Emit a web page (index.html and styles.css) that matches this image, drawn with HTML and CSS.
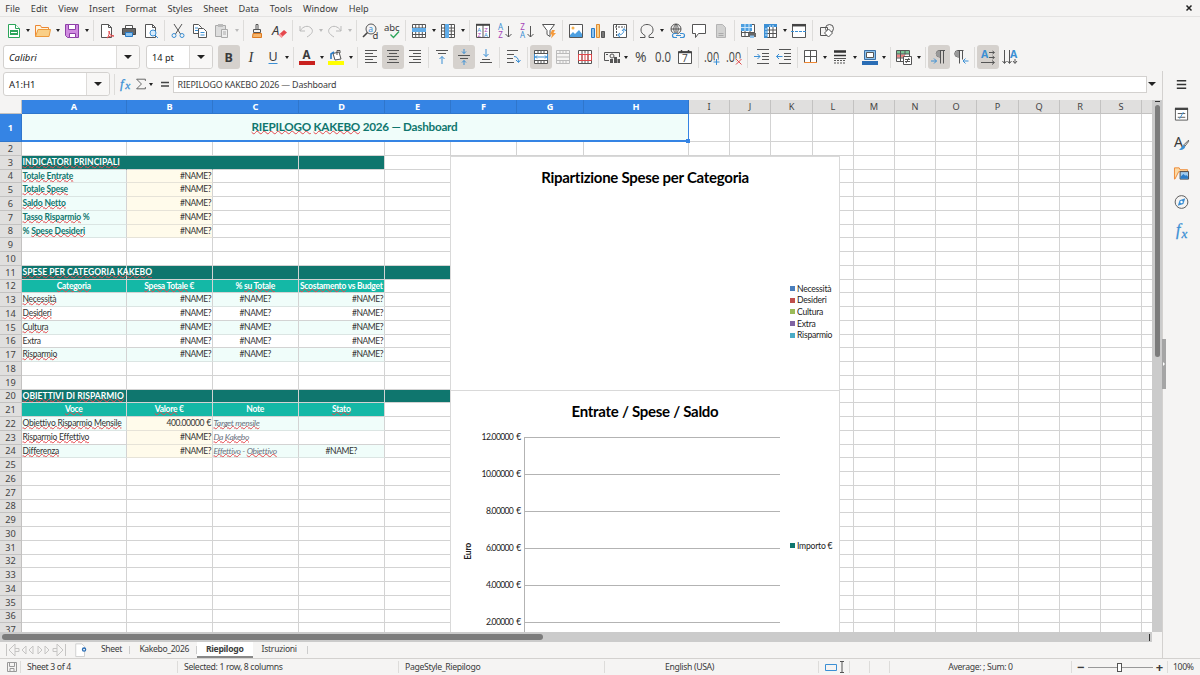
FILE: index.html
```html
<!DOCTYPE html>
<html lang="en">
<head>
  <meta charset="UTF-8" />
  <meta name="viewport" content="width=device-width, initial-scale=1.0"/>
  <title>Kakebo 2026</title>
  <link rel="stylesheet" href="styles.css">
</head>
<body>
  <nav class="menubar">
    <span>File</span><span>Edit</span><span>View</span><span>Insert</span><span>Format</span><span>Styles</span><span>Sheet</span><span>Data</span><span>Tools</span><span>Window</span><span>Help</span>
    <svg class="close" viewBox="0 0 8 8"><path stroke="#222" stroke-width="1.500" d="M1.500 1.500l5 5M6.500 1.500l-5 5"/></svg>
  </nav>

  <!-- Standard toolbar -->
  <div class="toolbar">
    <button><svg viewBox="0 0 16 16"><path class="gn" d="M2.500 1.500h7l4 4v9h-11z"/><path class="gn" d="M9.500 1.500v4h4"/><path fill="#2ca55a" d="M4 7h8v5H4z"/><path stroke="#fff" d="M5 9.500h6"/></svg></button><i class="dd"></i>
    <button><svg viewBox="0 0 16 16"><path fill="#fff3dc" stroke="#ed8733" d="M.5 13.500v-11h5l1 2h7v2"/><path fill="#f9cf87" stroke="#ed9a3c" d="M3 6.500h12.500l-1.500 7H.5z"/></svg></button><i class="dd"></i>
    <button><svg viewBox="0 0 16 16"><path fill="#d08be0" stroke="#8e3fa8" d="M1.500 1.500h13v13h-11l-2-2z"/><path fill="#fff" stroke="#8e3fa8" d="M4.500 1.500h7v5h-7zM5.500 10.500h6v4h-6z"/></svg></button><i class="dd"></i>
    <i class="sep"></i>
    <button><svg viewBox="0 0 16 16"><path class="paper" d="M2.500 1.500h7l3 3v10h-10z"/><path class="g" d="M9.500 1.500v3h3"/><path class="r" d="M8 15c2-2 2.500-5 2-7 0 3 2 5 5 5-3-.5-5 .5-7 2"/></svg></button>
    <button><svg viewBox="0 0 16 16"><path class="paper" d="M4.500 2.500h7v3h-7z"/><path fill="#666" stroke="#444" d="M1.500 5.500h13v6h-13z"/><path fill="#8ec3ee" stroke="#2a7cc7" d="M4.500 9.500h7v4h-7z"/></svg></button>
    <button><svg viewBox="0 0 16 16"><path class="paper" d="M2.500 1.500h7l3 3v10h-10z"/><path class="g" d="M9.500 1.500v3h3"/><circle cx="10" cy="10" r="3" fill="#d7ebfb" stroke="#3b8fd4"/><path class="b" d="M12 12l3 3"/></svg></button>
    <i class="sep"></i>
    <button><svg viewBox="0 0 16 16"><path class="g" d="M4 1l6.500 10M12 1L5.500 11"/><circle class="b" cx="4" cy="12.500" r="2"/><circle class="b" cx="12" cy="12.500" r="2"/></svg></button>
    <button><svg viewBox="0 0 16 16"><path class="paper" d="M1.500 1.500h5l3 3v6h-8z"/><path class="paper" d="M6.500 5.500h5l3 3v6h-8z"/><path class="b" d="M3 5h3M3 7.500h3M8.500 9.500h4M8.500 12h4"/></svg></button>
    <button class="off"><svg viewBox="0 0 16 16"><path fill="#ddd" stroke="#aaa" d="M1.500 2.500h10v11h-10z"/><path fill="#bbb" d="M4 1h5v3H4z"/><path fill="#eee" stroke="#aaa" d="M7.500 6.500h6v8h-6zM9 9h3M9 11h3"/></svg></button><i class="dd off"></i>
    <i class="sep"></i>
    <button><svg viewBox="0 0 16 16"><path class="g" d="M7 1.500h2v5H7zM4.500 6.500h7v3h-7z"/><path fill="#f6b56c" stroke="#df7a20" d="M4 10.500h8.500v4h-9z"/></svg></button>
    <button><svg viewBox="0 0 16 16"><text class="dark it" x="1" y="12" font-size="13">A</text><path fill="#e5484d" d="M7.500 12l5.500-5 3 2.500-5.500 5z"/><path fill="#f9a0a2" d="M7.500 12l1.500-1.500 3 3L10.500 15z"/></svg></button>
    <i class="sep"></i>
    <button class="off"><svg viewBox="0 0 16 16"><path class="lg" d="M2 3v5h5M2 8c3-5 8-6 11-3s1 6-4 9"/></svg></button><i class="dd off"></i>
    <button class="off"><svg viewBox="0 0 16 16"><path class="lg" d="M14 3v5H9M14 8c-3-5-8-6-11-3s-1 6 4 9"/></svg></button><i class="dd off"></i>
    <i class="sep"></i>
    <button><svg viewBox="0 0 16 16"><circle class="g" cx="9" cy="6" r="5"/><path stroke="#444" stroke-width="1.600" d="M5.500 9.500L1 14"/><text class="blue" x="6.200" y="8.500" font-size="8.500">a</text><text class="dark" x="10.500" y="15.500" font-size="9.500">d</text></svg></button>
    <button><svg viewBox="0 0 16 16"><text class="dark" x="0" y="7.500" font-size="9.500" textLength="15.500">abc</text><path fill="none" stroke="#2ca55a" stroke-width="1.300" d="M6.500 11.500l3 3L15 8.500"/></svg></button>
    <i class="sep"></i>
    <button><svg viewBox="0 0 16 16"><path class="paper" d="M1.500 1.500h13v13h-13z"/><path class="g" d="M1.500 5h13M1.500 11.500h13M4.700 1.500v13M8 1.500v13M11.300 1.500v13"/><path fill="#60adea" d="M1 5h14v4H1z"/></svg></button><i class="dd"></i>
    <button><svg viewBox="0 0 16 16"><path class="paper" d="M1.500 1.500h13v13h-13z"/><path class="g" d="M1.500 5h13M1.500 8h13M1.500 11.500h13M4.700 1.500v13M11.300 1.500v13"/><path fill="#60adea" d="M5 1h4v14H5z"/></svg></button><i class="dd"></i>
    <i class="sep"></i>
    <button><svg viewBox="0 0 16 16"><path class="paper" d="M1.500 1.500h13v13h-13zM8 1.500v13"/><path stroke="#444" stroke-width="2" d="M1 1.800h14"/><text class="blue" x="2.300" y="8.500" font-size="6">A</text><text class="purple" x="2.500" y="14" font-size="6">Z</text><text class="purple" x="9.300" y="8.500" font-size="6">Z</text><text class="blue" x="9" y="14" font-size="6">A</text></svg></button>
    <button><svg viewBox="0 0 16 16"><text class="blue" x="1" y="7" font-size="8">A</text><text class="purple" x="1.300" y="14.500" font-size="8">Z</text><path class="g" d="M11.500 3v11M8.500 11l3 3 3-3"/></svg></button>
    <button><svg viewBox="0 0 16 16"><text class="purple" x="1.300" y="7" font-size="8">Z</text><text class="blue" x="1" y="14.500" font-size="8">A</text><path class="g" d="M11.500 3v11M8.500 11l3 3 3-3"/></svg></button>
    <button><svg viewBox="0 0 16 16"><path class="paper" d="M1.500 1.500h12l-4.500 6v6l-3-2v-4z"/><path fill="#f59a3c" d="M11 7h3l-1.500 3H15l-5 5.500 1-4H9z"/></svg></button>
    <i class="sep"></i>
    <button><svg viewBox="0 0 16 16"><path class="paper" d="M1.500 1.500h13v13h-13z"/><circle cx="5" cy="5" r="1.500" fill="#f6b14f"/><path fill="#4c9fe0" d="M2 14v-2l3-3 2 2 4-4 3 4v3z"/></svg></button>
    <button><svg viewBox="0 0 16 16"><path fill="#8ec3ee" stroke="#2a7cc7" d="M1.500 5.500h3v9h-3z"/><path fill="#f9cf87" stroke="#df8a30" d="M6.500 1.500h3v13h-3z"/><path fill="#777" stroke="#555" d="M11.500 8.500h3v6h-3z"/></svg></button>
    <button><svg viewBox="0 0 16 16"><path class="paper" d="M1.500 1.500h13v13h-13z"/><path class="g" d="M3 4h10M4.500 2v12" stroke-dasharray="2 1"/><path class="b" d="M6 12c4 0 6-2 6-6M10 8l2-2.500L14 8M8 10l-2.500 2L8 14"/></svg></button>
    <i class="sep"></i>
    <button><svg viewBox="0 0 16 16"><path class="g" d="M1 14.500h5v-2C3 11 2 9 2 7c0-3.500 2.500-5.500 6-5.500s6 2 6 5.500c0 2-1 4-4 5.500v2h5"/></svg></button><i class="dd"></i>
    <button><svg viewBox="0 0 16 16"><circle class="g" cx="7" cy="6" r="5"/><path class="g" d="M2 6h10M7 1v10M7 1c-3 3-3 7 0 10M7 1c3 3 3 7 0 10"/><path fill="#f5f4f3" stroke="#3b8fd4" stroke-width="1.200" d="M8 10.500H5.500a2 2 0 000 4H8M11 10.500h2.500a2 2 0 010 4H11M7 12.500h5"/></svg></button>
    <button><svg viewBox="0 0 16 16"><path class="paper" d="M1.500 1.500h13v9h-7l-3 4v-4h-3z"/></svg></button>
    <button class="off"><svg viewBox="0 0 16 16"><path fill="#d2d2d1" stroke="#b4b4b4" d="M3.500 1.500h6l3 3v10h-9z"/><path stroke="#aaa" d="M5.500 10.500h5M5.500 12.500h5"/></svg></button>
    <i class="sep"></i>
    <button><svg viewBox="0 0 16 16"><path class="paper" d="M1.500 1.500h13v12h-13zM1.500 9.500h13M5 1.500v12M10 1.500v12"/><path fill="#4c9fe0" d="M1 1h11v7H1z"/><path stroke="#cde6f9" d="M1 4.500h11M5 1v7M9 1v7"/><path fill="#666" d="M8 10h8v4H8z"/><path fill="#8ec3ee" d="M10 12.500h4V15h-4z"/></svg></button>
    <button><svg viewBox="0 0 16 16"><path class="paper" d="M3.500 1.500h11v13h-11zM3.500 7h11M3.500 10.500h11M7.500 1.500v13M11 1.500v13"/><path fill="#3b8fd4" d="M2 1h13v3H2zM2 1h3.500v14H2z"/><path stroke="#cde6f9" d="M3 6h2M3 9h2M3 12h2M8 2v2M11 2v2"/></svg></button><i class="dd"></i>
    <button><svg viewBox="0 0 16 16"><path class="paper" d="M1.500 2.500h13v12h-13z"/><path stroke="#444" stroke-width="2.500" d="M1 2.200h14"/><path class="b" stroke-dasharray="3 1" d="M0 8.500h16"/></svg></button>
    <i class="sep"></i>
    <button><svg viewBox="0 0 16 16"><path class="g" d="M1.500 4.500h7v8h-7z"/><circle class="g" cx="10.500" cy="5.500" r="4"/><path class="paper" d="M9.500 6l4 4-4 4-4-4z"/></svg></button>
  </div>

  <!-- Formatting toolbar -->
  <div class="toolbar format">
    <div class="combo font"><em>Calibri</em><u></u></div>
    <div class="combo size"><span>14 pt</span><u></u></div>
    <button class="on"><svg viewBox="0 0 16 16"><text class="dark bold" x="3.500" y="12.500" font-size="12.500">B</text></svg></button>
    <button><svg viewBox="0 0 16 16"><text class="dark serif" x="5.500" y="12.500" font-size="14.500">I</text></svg></button>
    <button><svg viewBox="0 0 16 16"><text class="dark" x="3.500" y="12" font-size="12.500">U</text><path stroke="#3b8fd4" d="M3.500 14.500h9"/></svg></button><i class="dd"></i>
    <i class="sep"></i>
    <button><svg viewBox="0 0 16 16"><text class="dark bold" x="3.500" y="10" font-size="11.500">A</text><path fill="#c9211e" d="M0 12h16v4H0z"/></svg></button><i class="dd"></i>
    <button><svg viewBox="0 0 16 16"><path class="paper" d="M5 4.500l6-1.500 2 7-6 1z"/><path class="g" d="M9 6V1.500h3V4"/><path fill="none" stroke="#2a7cc7" stroke-width="1.600" d="M3 10V5l3-2"/><path fill="#ffff00" d="M0 12h16v4H0z"/></svg></button><i class="dd"></i>
    <i class="sep"></i>
    <button><svg viewBox="0 0 16 16"><path class="g" d="M2 1.500h12M2 4.500h8M2 7.500h12M2 10.500h8M2 13.500h12"/></svg></button>
    <button class="on"><svg viewBox="0 0 16 16"><path class="g" d="M2 1.500h12M4 4.500h8M2 7.500h12M4 10.500h8M2 13.500h12"/></svg></button>
    <button><svg viewBox="0 0 16 16"><path class="g" d="M2 1.500h12M6 4.500h8M2 7.500h12M6 10.500h8M2 13.500h12"/></svg></button>
    <i class="sep"></i>
    <button><svg viewBox="0 0 16 16"><path class="g" d="M2 1.500h12M4 4.500h8"/><path class="b" d="M8 15V7.500M5.500 10L8 7.500l2.500 2.500"/></svg></button>
    <button class="on"><svg viewBox="0 0 16 16"><path class="g" d="M2 6.500h12M4 9.500h8"/><path class="b" d="M8 0v4.500M6 2.500l2 2 2-2M8 16v-4.500M6 13.500l2-2 2 2"/></svg></button>
    <button><svg viewBox="0 0 16 16"><path class="g" d="M2 13.500h12M4 10.500h8"/><path class="b" d="M8 0v7.500M5.500 5L8 7.500 10.500 5"/></svg></button>
    <i class="sep"></i>
    <button><svg viewBox="0 0 16 16"><path class="g" d="M2 1.500h11M2 5.500h7M2 9.500h6M2 13.500h7"/><path class="b" d="M9 7.500c3 0 4.500 2 4.500 5.500M11 11l2.500 2.500 2-2.500"/></svg></button>
    <i class="sep"></i>
    <button class="on"><svg viewBox="0 0 16 16"><path class="paper" d="M1.500 1.500h13v13h-13zM1.500 4.500h13M1.500 11.500h13M5 1.500v3M8 1.500v3M11 1.500v3M5 11.500v3M8 11.500v3M11 11.500v3"/><path class="b" d="M2 8h12M4 6.500L2.500 8 4 9.500M12 6.500L13.500 8 12 9.500M1.500 5v6M14.500 5v6"/></svg></button>
    <button class="off"><svg viewBox="0 0 16 16"><path class="lg" d="M1.500 1.500h13v13h-13zM1.500 4.500h13M1.500 11.500h13M5 1.500v3M8 1.500v3M11 1.500v3M5 11.500v3M8 11.500v3M11 11.500v3M1.500 8h13"/></svg></button>
    <button><svg viewBox="0 0 16 16"><path class="paper" d="M1.500 1.500h13v13h-13zM5 1.500v13M8 1.500v3M11 1.500v13M8 11.500v3"/><path class="r" d="M1.500 5.500h13v6h-13zM5 5.500v6M8 5.500v6M11 5.500v6"/></svg></button>
    <i class="sep"></i>
    <button><svg viewBox="0 0 16 16"><path class="g" d="M5 11.500H.5v-8h15V8"/><circle class="g" cx="8" cy="7" r="2"/><path fill="#555" d="M6 10h3v4H6zM10 8h3v6h-3zM13.500 10H16v4h-2.500zM2 5h2v1H2z"/></svg></button><i class="dd"></i>
    <button><svg viewBox="0 0 16 16"><text class="thin" x="2" y="13" font-size="14" textLength="11.500" lengthAdjust="spacingAndGlyphs">%</text></svg></button>
    <button><svg viewBox="0 0 16 16"><text class="thin" x="0" y="13" font-size="15" textLength="16" lengthAdjust="spacingAndGlyphs">0.0</text></svg></button>
    <button><svg viewBox="0 0 16 16"><path class="paper" d="M1.500 2.500h13v12h-13z"/><path stroke="#444" stroke-width="1.500" d="M1 3.500h14M4.500 1v3M11.500 1v3"/><text class="thin" x="5" y="13" font-size="10">7</text></svg></button>
    <i class="sep"></i>
    <button><svg viewBox="0 0 16 16"><text class="thin" x="0" y="12.500" font-size="15" textLength="15" lengthAdjust="spacingAndGlyphs">.00</text><path class="halo" d="M12.500 9v6M9.500 12.500h6"/><path class="b" d="M12.500 10v6M9.500 13h6"/></svg></button>
    <button><svg viewBox="0 0 16 16"><text class="thin" x="0" y="12.500" font-size="15" textLength="15" lengthAdjust="spacingAndGlyphs">.00</text><path class="halo" d="M10 10l5 5M15 10l-5 5"/><path class="r" d="M10 10l5.500 5.500M15.500 10L10 15.500"/></svg></button>
    <i class="sep"></i>
    <button><svg viewBox="0 0 16 16"><path class="g" d="M3 .5h12M8 4.500h7M8 7.500h7M8 10.500h7M3 14.500h12"/><path class="b" d="M0 7.500h6M3.500 5L6 7.500 3.500 10"/></svg></button>
    <button><svg viewBox="0 0 16 16"><path class="g" d="M3 .5h12M8 4.500h7M8 7.500h7M8 10.500h7M3 14.500h12"/><path class="b" d="M.5 7.500h6M3 5L.5 7.500 3 10"/></svg></button>
    <i class="sep"></i>
    <button><svg viewBox="0 0 16 16"><path class="paper" d="M1.500 1.500h12v12h-12zM7.500 1.500v12M1.500 7.500h12"/><path stroke="#ed8733" d="M1 13.500h13"/></svg></button><i class="dd"></i>
    <button><svg viewBox="0 0 16 16"><path stroke="#333" stroke-width="2.500" d="M2 2.500h12"/><path stroke="#333" stroke-width="1.500" d="M2 6.500h12"/><path class="g" d="M2 9.500h12"/><path class="g" stroke-dasharray="2 1" d="M2 11.500h12M2 14h12"/></svg></button><i class="dd"></i>
    <button><svg viewBox="0 0 16 16"><path fill="#8ec3ee" stroke="#3b6fa4" d="M2.500 1.500h11v9h-11z"/><path class="paper" d="M4.500 3.500h7v5h-7z"/><path fill="#2a6db5" d="M0 12h16v4H0z"/></svg></button><i class="dd"></i>
    <i class="sep"></i>
    <button><svg viewBox="0 0 16 16"><path class="paper" d="M.5 1.500h13v11H.5z"/><path fill="#7cc598" d="M1 2h12v3H1z"/><path fill="#ee8484" d="M1 5.500h8v3H1z"/><path class="g" d="M.5 5h13M.5 9h8M4.500 1.500v11M9 1.500v4"/><path class="paper" d="M7.500 7.500h8v8h-8z"/><path class="g" d="M9 10.500h5M9 12.500h5M13 9l-3 5"/></svg></button><i class="dd"></i>
    <i class="sep"></i>
    <button class="on"><svg viewBox="0 0 16 16"><path class="g" d="M14 1.500H8.500a3 3 0 000 6.500h1M9.500 1.500v13M12.500 1.500v13"/><path fill="#999" d="M9 2H8a3 3 0 000 6h1z"/><path class="b" d="M0 12h5.500M3 9.500L5.500 12 3 14.500"/></svg></button>
    <button><svg viewBox="0 0 16 16"><path class="g" d="M10.500 1.500H5a3 3 0 000 6.500h1M6.500 1.500v13M9.500 1.500v9"/><path fill="#999" d="M6 2H5a3 3 0 000 6h1z"/><path class="b" d="M15.500 12H10M12.500 9.500L10 12l2.500 2.500"/></svg></button>
    <i class="sep"></i>
    <button class="on"><svg viewBox="0 0 16 16"><text class="blue bold" x="1" y="9" font-size="10.500">A</text><path class="g" d="M9 3.500h5M12.500 2l2 1.500-2 1.500M9 8.500h5M12.500 7l2 1.500-2 1.500M1 13.500h13M12 11.500l2.500 2-2.500 2"/></svg></button>
    <button><svg viewBox="0 0 16 16"><text class="blue bold" x="8" y="9" font-size="10.500">A</text><path class="g" d="M2.500 1v13M.5 12l2 2.500 2-2.500M7.500 1v13M5.500 12l2 2.500 2-2.500M13 10v4M11 12l2 2.500 2-2.500"/></svg></button>
  </div>

  <main class="workspace">
    <section class="document">
      <div class="formula-bar">
        <div class="combo name-box"><span>A1:H1</span><u></u></div>
        <i class="sep"></i>
        <svg class="fx" viewBox="0 0 16 16"><text x="1" y="12" font-size="15">f</text><text x="7" y="14" font-size="13">x</text></svg>
        <svg class="sum" viewBox="0 0 16 16"><path class="g" d="M13 4.500V2.500H3l5.500 5.500L3 13.500h10v-2"/></svg><i class="dd"></i>
        <svg class="equals" viewBox="0 0 16 16"><path stroke="#444" stroke-width="1.500" d="M4 6.500h8M4 10h8"/></svg>
        <div class="formula">RIEPILOGO KAKEBO 2026 — Dashboard</div>
        <u></u>
      </div>

      <div class="sheet-area">
        <div class="sheet">
          <div class="grid" id="grid"></div>

          <div class="chart pie">
            <h2>Ripartizione Spese per Categoria</h2>
            <ul class="legend">
              <li class="c1">Necessità</li>
              <li class="c2">Desideri</li>
              <li class="c3">Cultura</li>
              <li class="c4">Extra</li>
              <li class="c5">Risparmio</li>
            </ul>
          </div>

          <div class="chart bar">
            <h2>Entrate / Spese / Saldo</h2>
            <div class="plot">
              <span class="axis-title">Euro</span>
              <ul class="ticks">
                <li>12.00000 €</li><li>10.00000 €</li><li>8.00000 €</li><li>6.00000 €</li><li>4.00000 €</li><li>2.00000 €</li>
              </ul>
              <div class="lines"><i></i><i></i><i></i><i></i><i></i><i></i></div>
              <ul class="legend"><li class="c6">Importo €</li></ul>
            </div>
          </div>
        </div>
        <div class="vscroll"><i></i></div>
      </div>

      <div class="hscroll"><i></i></div>

      <div class="tabs">
        <svg class="nav" viewBox="0 0 62 14"><path d="M1.500 1v12M10 1L4 7l6 6zM10 5.500h4v3h-4M21 3l-4 4 4 4zM28 3l-4 4 4 4zM33 3l4 4-4 4zM40 3l4 4-4 4zM52 1l6 6-6 6zM52 5.500h-4v3h4M60.500 1v12"/></svg>
        <svg class="add" viewBox="0 0 14 16"><path fill="#fff" stroke="#ccc" d="M1 1h7l3 3v11.500H1z"/><circle cx="10.500" cy="7.500" r="1.800" fill="#fff" stroke="#2a6db5" stroke-width="1.500"/></svg>
        <span>Sheet</span><span>Kakebo_2026</span><span class="current">Riepilogo</span><span class="last">Istruzioni</span>
      </div>
    </section>

    <aside class="sidebar">
      <i class="grip"></i>
      <svg viewBox="0 0 16 16"><path stroke="#333" stroke-width="1.600" d="M3 3.500h10M3 7.500h10M3 11.500h10"/></svg>
      <svg viewBox="0 0 16 16"><path class="paper" d="M1.500 2.500h13v12h-13z"/><path stroke="#444" stroke-width="2.500" d="M1 2.500h14"/><path class="g" d="M4 7.500h8M4 11.500h8"/><path class="b" d="M6 13l4-7"/></svg>
      <svg viewBox="0 0 16 16"><text class="dark" x="0" y="12.500" font-size="15">A</text><path class="paper" d="M15.500 5l-5 5 1 1.500 4-5z"/><path fill="#3b8fd4" d="M10.500 10l1.500 2c-1 3-4 4-7 3 3-1 3-4 5.500-5"/></svg>
      <svg viewBox="0 0 16 16"><path fill="#fbd9a5" stroke="#ed8733" d="M.5 14.500v-12h5l1 2h8v2H5l-4 8z"/><path fill="#9ecbef" stroke="#444" d="M6.500 6.500h9v8h-9z"/><path fill="#2a7cc7" d="M7 14v-2l3-3 2 2 1-1 2 2v2z"/></svg>
      <svg viewBox="0 0 16 16"><circle class="g" cx="8" cy="8" r="6.800"/><path fill="#3b8fd4" d="M12 4l-2 6-6 2 2-6z"/><circle cx="8" cy="8" r="1.300" fill="#fff"/></svg>
      <svg class="fx" viewBox="0 0 16 16"><text x="2" y="12" font-size="17">f</text><text x="8" y="15" font-size="14">x</text></svg>
    </aside>
  </main>

  <footer class="statusbar">
    <svg class="disk" viewBox="0 0 12 12"><path d="M1.500 1.500h9v9h-9zM3.500 1.500v4h5v-4M4 10.500v-3h4v3"/></svg>
    <span class="st-sheet">Sheet 3 of 4</span>
    <span class="st-sel">Selected: 1 row, 8 columns</span>
    <span class="st-style">PageStyle_Riepilogo</span>
    <span class="st-lang">English (USA)</span>
    <span class="st-mode"><svg viewBox="0 0 20 12"><path class="b" d="M.5 3.500h11v6H.5z"/><path class="g" d="M15 .5h4M17 .5v11M15 11.500h4"/></svg></span>
    <span class="st-blank"></span>
    <span class="st-blank"></span>
    <span class="st-sum">Average: ; Sum: 0</span>
    <span class="st-zoom"><b>−</b><i class="slider"></i><b>+</b></span>
    <span class="st-pct">100%</span>
  </footer>

  <script src="script.js"></script>
</body>
</html>
```
FILE: styles.css
```css
/* === Base === */
* {
  margin: 0;
  padding: 0;
  box-sizing: border-box;
}

body {
  width: 1200px;
  height: 675px;
  overflow: hidden;
  display: flex;
  flex-direction: column;
  background: #f5f4f3;
  color: #3c3c3c;
  font-family: "Noto Sans", sans-serif;
  font-size: 9.2px;
}

svg {
  width: 16px;
  height: 16px;
  flex: none;
  overflow: visible;
  fill: none;
}

ul {
  list-style: none;
}

/* === Icon strokes === */
.g { stroke: #555; fill: none; }
.lg { stroke: #bbb; fill: none; }
.b { stroke: #3b8fd4; fill: none; }
.r { stroke: #e0484b; fill: none; }
.gn { stroke: #2ca55a; fill: #fff; }
.paper { stroke: #555; fill: #fff; }
.halo { stroke: #f5f4f3; stroke-width: 2.5; }
.dark { fill: #3a3a3a; }
.blue { fill: #3b8fd4; }
.purple { fill: #a645b8; }
.thin { fill: #444; font-family: "Open Sans"; font-weight: 400; }
.bold { font-weight: bold; }
.it { font-style: italic; }
.serif { font-family: "Liberation Serif"; font-style: italic; }

.fx text {
  fill: #3b8fd4;
  stroke: #3b8fd4;
  stroke-width: 0.3px;
  font-family: "Liberation Serif", serif;
  font-style: italic;
}

/* === Menu bar === */
.menubar {
  height: 17px;
  flex: none;
  display: flex;
  align-items: center;
  gap: 10.85px;
  padding-left: 5.3px;
  border-bottom: 1px solid #e4e3e2;
}

.close {
  width: 8px;
  height: 8px;
  margin-left: auto;
  margin-right: 7px;
}

/* === Toolbars === */
.toolbar {
  height: 27px;
  flex: none;
  display: flex;
  align-items: center;
  padding-left: 2.6px;
}

.toolbar button {
  width: 22px;
  height: 24px;
  flex: none;
  display: flex;
  align-items: center;
  justify-content: center;
  background: none;
  border: none;
  border-radius: 3px;
  font-family: inherit;
}

.toolbar button.on {
  background: #d5d1cd;
}

.dd {
  width: 7.4px;
  flex: none;
  display: flex;
  justify-content: center;
}

.dd::before,
u::before {
  content: "";
  border: 2.5px solid transparent;
  border-top: 3px solid #222;
  border-bottom: none;
}

.dd.off::before {
  border-top-color: #bbb;
}

.sep {
  width: 1px;
  height: 21px;
  flex: none;
  margin: 0 2.1px;
  background: #dddcda;
}

.format {
  padding-left: 3px;
  padding-bottom: 1px;
}

.combo {
  height: 24px;
  flex: none;
  display: flex;
  align-items: center;
  padding-left: 5px;
  background: #fff;
  border: 1px solid #d3d1cf;
  border-radius: 3px;
  color: #222;
}

u {
  width: 23px;
  height: 22px;
  margin-left: auto;
  display: flex;
  align-items: center;
  justify-content: center;
  background: #f8f7f6;
  border-left: 1px solid #dddbd9;
  border-radius: 0 3px 3px 0;
}

u::before {
  border-width: 4px 4px 0;
}

.font {
  width: 137px;
  margin-right: 6px;
  font-size: 9.5px;
}

.size {
  width: 67px;
  margin-right: 4.5px;
}

/* === Formula bar === */
.workspace {
  flex: 1;
  min-height: 0;
  display: flex;
}

.document {
  width: 1162px;
  display: flex;
  flex-direction: column;
}

.formula-bar {
  height: 29px;
  flex: none;
  display: flex;
  align-items: center;
  padding: 0 0 3px 3px;
}

.name-box {
  width: 107px;
  margin-right: 2px;
  font-size: 9.5px;
}

.sum,
.formula-bar .fx {
  width: 14px;
  height: 14px;
}

.formula-bar .fx {
  margin: 0 1px 0 1.5px;
}

.equals {
  margin-left: 1.5px;
}

.formula {
  width: 974px;
  height: 17px;
  line-height: 15px;
  padding-left: 4px;
  background: #fff;
  border: 1px solid #d3d1cf;
  font-size: 8.9px;
  letter-spacing: -0.2px;
}

.formula-bar > u {
  width: 11px;
  margin: 0;
  border: none;
  background: none;
}

/* === Sheet === */
.sheet-area {
  flex: 1;
  min-height: 0;
  display: flex;
}

.sheet {
  position: relative;
  width: 1152px;
  overflow: hidden;
  background: #fff;
}

.grid {
  display: grid;
  grid-template-columns: 22px 105px 86px 86px 86px 66px 66px 67px 105px 41px 41px 42px 41px 41px 41px 41px 42px 41px 41px 41px 41px;
  grid-template-rows: 14px 28px;
  grid-auto-rows: 13.757px;
}

.head {
  display: flex;
  align-items: center;
  justify-content: center;
  overflow: hidden;
  background: #e0dfde;
  border-right: 1px solid #c3c2c1;
  border-bottom: 1px solid #c3c2c1;
  color: #444;
  font-size: 9.2px;
}

.head.sel {
  background: #3584e4;
  border-color: #2f76cc;
  color: #fff;
  font-weight: bold;
}

.corner {
  background: #f5f4f3;
}

.cell {
  min-width: 0;
  padding: 0 1px 0 0.5px;
  border-right: 1px solid #d3d3d3;
  border-bottom: 1px solid #d3d3d3;
  font-family: Lato, sans-serif;
  font-size: 8.5px;
  letter-spacing: -0.25px;
  line-height: 12.4px;
  white-space: nowrap;
  color: #333;
}

.cell s {
  text-decoration: underline wavy #e5484d 0.5px;
  text-underline-offset: -0.5px;
  text-decoration-skip-ink: none;
}

.center { text-align: center; letter-spacing: -0.4px; }
.right { text-align: right; letter-spacing: -0.45px; word-spacing: 0.8px; }

/* merged title, outlined as the current selection */
.title {
  position: relative;
  grid-column: span 8;
  padding-left: 0;
  border: 1px solid #3584e4;
  border-left: none;
  border-top: none;
  border-bottom-width: 2px;
  background: #f0fdfa;
  color: #0f766e;
  font-size: 11.7px;
  letter-spacing: -0.24px;
  font-weight: bold;
  line-height: 25px;
  text-align: center;
}

.title::after {
  content: "";
  position: absolute;
  right: -2px;
  bottom: -3px;
  width: 4px;
  height: 4px;
  background: #3584e4;
}

.band {
  position: relative;
  background: #0f766e;
  color: #fff;
  font-weight: bold;
  letter-spacing: 0.04px;
}

.band.joined { border-right-color: #0f766e; }
.band.over { z-index: 1; }

.th {
  background: #14b8a6;
  color: #fff;
  font-weight: bold;
  text-align: center;
  letter-spacing: -0.28px;
}

.mint { background: #f0fdfa; border-bottom-color: #dbe5e3; }
.cream { background: #fffbeb; border-bottom-color: #e6e3d8; }
.kpi { color: #0f766e; font-weight: bold; letter-spacing: -0.15px; }
.note { color: #6b7280; font-style: italic; letter-spacing: -0.33px; }

/* === Charts, floating over the cells === */
.chart {
  position: absolute;
  left: 450px;
  width: 390px;
  background: #fff;
  border: 1px solid #d9d9d9;
  font-family: Lato, sans-serif;
  font-size: 8.6px;
  letter-spacing: -0.23px;
  color: #222;
}

.pie {
  top: 56px;
  height: 235px;
}

.bar {
  top: 290px;
  height: 260px;
}

.chart h2 {
  padding-top: 11px;
  font-size: 15px;
  letter-spacing: -0.28px;
  line-height: 18px;
  text-align: center;
  color: #000;
}

.legend li {
  display: flex;
  align-items: center;
  gap: 2px;
  height: 11.6px;
}

.legend li::before {
  content: "";
  width: 5px;
  height: 5px;
  background: var(--key);
}

.c1 { --key: #4a7ebb; }
.c2 { --key: #c0504d; }
.c3 { --key: #9bbb59; }
.c4 { --key: #8064a2; }
.c5 { --key: #4bacc6; }
.c6 { --key: #0f766e; }

.pie .legend {
  margin: 97px 0 0 339px;
}

.plot {
  display: flex;
  padding: 11px 0 0 12px;
}

.axis-title {
  align-self: center;
  width: 10px;
  margin-top: 13px;
  writing-mode: vertical-rl;
  transform: rotate(180deg);
  font-weight: bold;
  line-height: 10px;
}

.ticks {
  width: 47.5px;
  text-align: right;
  letter-spacing: -0.67px;
  word-spacing: 1.5px;
}

.ticks li {
  height: 37px;
  line-height: 12px;
}

.lines {
  width: 258.5px;
  margin: 6px 0 0 1px;
  padding-left: 2px;
}

.lines i {
  display: block;
  height: 37px;
  border-top: 1px solid #b3b3b3;
  border-left: 1px solid #b3b3b3;
}

.bar .legend {
  padding: 109px 0 0 10px;
}

/* === Scroll bars === */
.vscroll {
  width: 10px;
  padding: 1px 2.5px 0;
  background: #cbcbcb;
}

.vscroll::before {
  content: "";
  display: block;
  height: 1px;
  margin-bottom: 3px;
  background: #333;
}

.vscroll i {
  display: block;
  width: 5px;
  height: 252px;
  border-radius: 3px;
  background: #7c7c7c;
}

.hscroll {
  width: 1152px;
  height: 10px;
  flex: none;
  display: flex;
  align-items: center;
  padding-left: 2px;
  background: #cbcbcb;
}

.hscroll i {
  width: 541px;
  height: 6px;
  border-radius: 3px;
  background: #7c7c7c;
}

.hscroll::after {
  content: "";
  width: 1px;
  height: 7px;
  margin-left: 606px;
  background: #333;
}

/* === Sheet tabs === */
.tabs {
  height: 16px;
  flex: none;
  display: flex;
  align-items: center;
  padding-left: 5px;
  font-size: 8.6px;
  letter-spacing: -0.35px;
}

.nav {
  width: 62px;
  height: 14px;
  stroke: #c6c5c4;
}

.add {
  width: 14px;
  height: 14px;
  margin: 0 4px 0 7px;
}

.tabs span {
  position: relative;
  height: 16px;
  line-height: 14px;
  padding: 0 8.3px 0 9px;
}

.tabs span::after {
  content: "";
  position: absolute;
  right: 0;
  top: 4px;
  height: 8px;
  border-right: 1px solid #ccc;
}

.tabs .current {
  padding: 0 9px 0 8.5px;
  background: #fff;
  border-bottom: 2px solid #888;
  font-weight: bold;
  letter-spacing: -0.27px;
}

.tabs .current::after {
  content: none;
}

.tabs .last {
  padding-right: 11px;
  letter-spacing: -0.27px;
}

/* === Sidebar === */
.sidebar {
  position: relative;
  flex: 1;
  display: flex;
  flex-direction: column;
  align-items: center;
  gap: 13.2px;
  padding-top: 6px;
  border-left: 1px solid #d3d1cf;
}

.sidebar svg {
  width: 15px;
}

.grip {
  position: absolute;
  left: -1px;
  top: 268px;
  width: 4px;
  height: 50px;
  background: #a5a5a5;
}

.grip::before {
  content: "";
  display: block;
  margin: 23px 0 0 1px;
  width: 0;
  border: 2px solid transparent;
  border-left: 2px solid #fff;
  border-right: none;
}

/* === Status bar === */
.statusbar {
  height: 17px;
  flex: none;
  display: flex;
  align-items: center;
  border-top: 1px solid #d3d1cf;
  font-size: 8.7px;
  letter-spacing: -0.35px;
}

.statusbar span {
  flex: none;
  height: 12px;
  line-height: 12px;
  padding-left: 6px;
  border-left: 1px solid #dddcda;
}

.disk {
  width: 12px;
  height: 12px;
  margin: 0 2px 0 6px;
  stroke: #999;
}

.statusbar .st-sheet { width: 157px; }
.statusbar .st-sel { width: 221px; }
.statusbar .st-style { width: 206px; }
.statusbar .st-lang { width: 214px; padding: 0 44px 0 0; text-align: center; }
.statusbar .st-mode { width: 31px; }
.statusbar .st-mode svg { width: 20px; height: 12px; }
.statusbar .st-blank { width: 20px; }
.statusbar .st-sum { width: 182px; padding: 0; text-align: center; }

.statusbar .st-zoom {
  width: 96px;
  display: flex;
  align-items: center;
  gap: 3.3px;
  padding-left: 5px;
}

.st-zoom b {
  font-size: 13px;
  line-height: 10px;
}

.slider {
  width: 65px;
  height: 1px;
  display: flex;
  align-items: center;
  justify-content: center;
  background: #999;
}

.slider::before {
  content: "";
  width: 3px;
  height: 7px;
  margin-right: 1px;
  border: 1px solid #555;
  background: #fff;
}

.statusbar .st-pct { padding-left: 5px; }
```
FILE: script.js
```js
const grid = document.getElementById('grid');
const columns = 'ABCDEFGHIJKLMNOPQRST'.split('');
const lastRow = 37;

// class and html for every cell that is not plain; <s> marks a word the spell checker does not know
const cells = {
  A1: ['title', '<s>RIEPILOGO</s> <s>KAKEBO</s> 2026 — Dashboard'],

  A3: ['band joined', '<s>INDICATORI PRINCIPALI</s>'],
  B3: ['band joined', ''], C3: ['band', ''], D3: ['band', ''],
  A4: ['mint kpi', '<s>Totale Entrate</s>'],
  A5: ['mint kpi', '<s>Totale Spese</s>'],
  A6: ['mint kpi', '<s>Saldo Netto</s>'],
  A7: ['mint kpi', '<s>Tasso Risparmio</s> %'],
  A8: ['mint kpi', '% <s>Spese Desideri</s>'],

  A11: ['band over', '<s>SPESE PER CATEGORIA KAKEBO</s>'],
  A12: ['th', '<s>Categoria</s>'],
  B12: ['th', '<s>Spesa Totale</s> €'],
  C12: ['th', '% <s>su Totale</s>'],
  D12: ['th', '<s>Scostamento</s> vs Budget'],

  A20: ['band over', '<s>OBIETTIVI</s> DI <s>RISPARMIO</s>'],
  A21: ['th', '<s>Voce</s>'],
  B21: ['th', '<s>Valore</s> €'],
  C21: ['th', 'Note'],
  D21: ['th', '<s>Stato</s>'],
  A22: ['mint', '<s>Obiettivo Risparmio Mensile</s>'],
  B22: ['cream right', '400.00000 €'],
  C22: ['mint note', '<s>Target mensile</s>'],
  D22: ['mint', ''],
  A23: ['', '<s>Risparmio Effettivo</s>'],
  B23: ['cream right', '#NAME?'],
  C23: ['note', '<s>Da Kakebo</s>'],
  A24: ['mint', '<s>Differenza</s>'],
  B24: ['cream right', '#NAME?'],
  C24: ['mint note', '<s>Effettivo</s> - <s>Obiettivo</s>'],
  D24: ['mint center', '#NAME?']
};

for (let r = 4; r <= 8; r++) {
  cells['B' + r] = ['cream right', '#NAME?'];
}

for (const c of 'BCDE') {
  cells[c + 11] = ['band', ''];
  cells[c + 20] = ['band', ''];
}

['<s>Necessità</s>', '<s>Desideri</s>', '<s>Cultura</s>', 'Extra', '<s>Risparmio</s>'].forEach((name, i) => {
  const r = 13 + i;
  const fill = i % 2 === 0 ? 'mint ' : '';
  cells['A' + r] = [fill, name];
  cells['B' + r] = [fill + 'right', '#NAME?'];
  cells['C' + r] = [fill + 'center', '#NAME?'];
  cells['D' + r] = [fill + 'right', '#NAME?'];
});

let html = '<div class="head corner"></div>';
columns.forEach((c, i) => {
  html += `<div class="head ${i < 8 ? 'sel' : ''}">${c === 'T' ? '' : c}</div>`;
});

for (let r = 1; r <= lastRow; r++) {
  html += `<div class="head ${r === 1 ? 'sel' : ''}">${r}</div>`;
  columns.forEach((c, i) => {
    if (r === 1 && i > 0 && i < 8) return; // covered by the merged title
    const [cls, text] = cells[c + r] || ['', ''];
    html += `<div class="cell ${cls}">${text}</div>`;
  });
}

grid.innerHTML = html;
```
